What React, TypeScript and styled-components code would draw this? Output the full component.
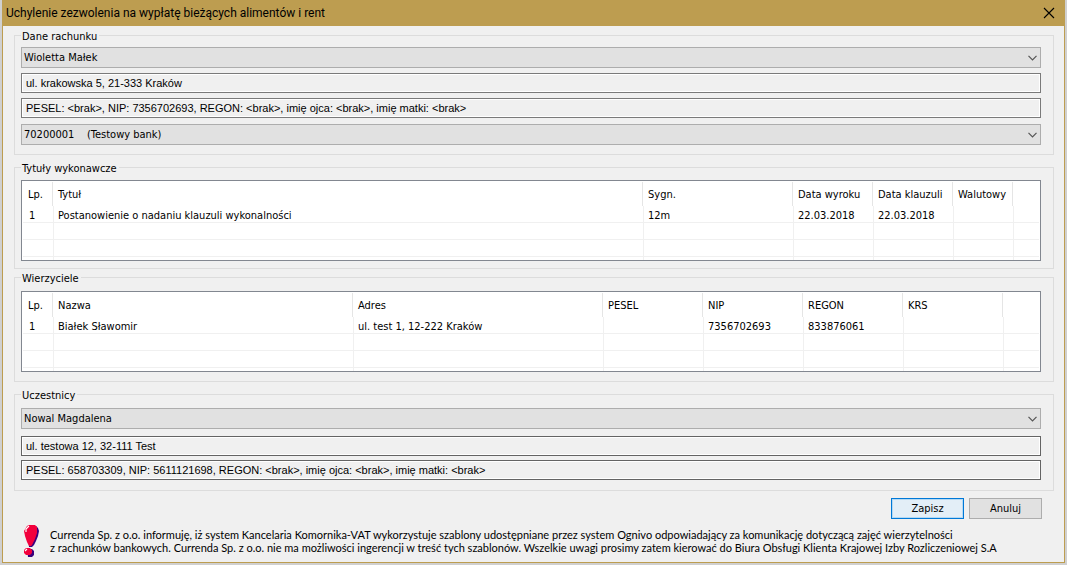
import React from 'react';
import styled, { createGlobalStyle } from 'styled-components';

const GlobalStyle = createGlobalStyle`
  *, *::before, *::after { box-sizing: border-box; }
  body {
    margin: 0;
    background: #d0d0d0;
    color: #000;
    font-family: "DejaVu Sans Condensed", "DejaVu Sans", "Liberation Sans", sans-serif;
    font-stretch: condensed;
    font-size: 11px;
    line-height: 13px;
  }
`;

const Desktop = styled.div`
  padding: 0 2px 2px;
`;

const Dialog = styled.main`
  border: 1px solid #bd9d50;
  border-top: 0;
  background: #f0f0f0;
`;

const TitleBar = styled.header`
  display: flex;
  align-items: center;
  justify-content: space-between;
  height: 26px;
  padding: 0 9px 0 3px;
  background: #bd9d50;
`;

const Title = styled.h1`
  margin: 0;
  font: 400 12px/16px Roboto, "Noto Sans", sans-serif;
`;

const CloseButton = styled.button`
  display: flex;
  padding: 0;
  border: 0;
  background: none;
`;

const Form = styled.form`
  padding: 3px 10px 5px 11px;
`;

const Group = styled.fieldset<{ $top: number; $bottom: number; $after: number }>`
  min-width: 0;
  margin: 0 0 ${(p) => p.$after}px;
  padding: ${(p) => p.$top}px 12px ${(p) => p.$bottom}px 6px;
  border: 1px solid #dcdcdc;
`;

const Legend = styled.legend`
  padding: 0 2px 0 1px;
  height: 13px;
  line-height: 15px;
`;

const Stack = styled.div`
  display: flex;
  flex-direction: column;
`;

const SelectBox = styled.div<{ $before?: number }>`
  position: relative;
  margin-top: ${(p) => p.$before ?? 0}px;
`;

const Select = styled.select`
  appearance: none;
  display: block;
  width: 100%;
  height: 21px;
  padding: 0 20px 0 2px;
  border: 1px solid #adadad;
  border-radius: 0;
  background: #e1e1e1;
  color: #000;
  font: inherit;
`;

const Chevron = styled.svg`
  position: absolute;
  top: 8px;
  right: 4px;
  pointer-events: none;
`;

const Field = styled.input<{ $before: number; $dark?: boolean }>`
  display: block;
  width: 100%;
  height: 20px;
  margin-top: ${(p) => p.$before}px;
  padding: 0 4px;
  border: 1px solid ${(p) => (p.$dark ? '#646464' : '#7a7a7a')};
  border-radius: 0;
  background: #f0f0f0;
  box-shadow: inset 0 0 0 1px #fff;
  color: #000;
  font: inherit;
  font-family: "Liberation Sans", sans-serif;
`;

const ListView = styled.div`
  height: 81px;
  padding: 1px;
  border: 1px solid #828790;
  background: #fff;
  overflow: hidden;
`;

const Table = styled.table`
  width: 100%;
  table-layout: fixed;
  border-collapse: separate;
  border-spacing: 0;
`;

const HeadCell = styled.th`
  height: 24px;
  padding: 0 0 0 4px;
  background: linear-gradient(#e5e5e5, #e5e5e5) right 1px top / 1px 100% no-repeat;
  font-weight: 400;
  text-align: left;
  white-space: nowrap;

  &:first-child { padding-left: 5px; }
  &:last-child { background: none; }
`;

const Cell = styled.td`
  height: 17px;
  padding: 2px 0 0 4px;
  border-right: 1px solid #f0f0f0;
  border-bottom: 1px solid #f0f0f0;
  white-space: nowrap;

  &:first-child { padding-left: 6px; }
  &:last-child { border-right: 0; }
`;

const Actions = styled.div`
  display: flex;
  justify-content: flex-end;
  gap: 5px;
  padding: 0 12px 0 0;
`;

const Button = styled.button<{ $primary?: boolean }>`
  width: 73px;
  height: 21px;
  padding: 0;
  border: 1px solid ${(p) => (p.$primary ? '#0078d7' : '#adadad')};
  background: ${(p) => (p.$primary ? '#e3eef7' : '#e1e1e1')};
  box-shadow: ${(p) => (p.$primary ? 'inset 0 0 0 1px #b5d9f3' : 'none')};
  color: #000;
  font: inherit;
`;

const Notice = styled.div`
  display: flex;
  align-items: flex-start;
  gap: 10px;
  padding: 5px 0 0 9px;
`;

const NoticeText = styled.p`
  margin: 4px 0 1px;
  font-family: Lato, sans-serif;
  white-space: nowrap;
`;

type Column = { label: string; width?: number };

function DropDown({ label, value, before }: { label: string; value: string; before?: number }) {
  return (
    <SelectBox $before={before}>
      <Select aria-label={label} defaultValue={value}>
        <option value={value}>{value}</option>
      </Select>
      <Chevron width="9" height="6" viewBox="0 0 9 6" fill="none" stroke="#555" strokeWidth="1.2" aria-hidden="true">
        <path d="M0.5 0.8 4.5 4.8 8.5 0.8" />
      </Chevron>
    </SelectBox>
  );
}

function DataList({ label, columns, rows }: { label: string; columns: Column[]; rows: string[][] }) {
  return (
    <ListView>
      <Table aria-label={label}>
        <colgroup>
          {columns.map((c, i) => (
            <col key={i} width={c.width} />
          ))}
        </colgroup>
        <thead>
          <tr>
            {columns.map((c, i) => (
              <HeadCell key={i}>{c.label}</HeadCell>
            ))}
          </tr>
        </thead>
        <tbody>
          {[...rows, [], [], []].map((row, r) => (
            <tr key={r}>
              {columns.map((_, i) => (
                <Cell key={i}>{row[i]}</Cell>
              ))}
            </tr>
          ))}
        </tbody>
      </Table>
    </ListView>
  );
}

const titleColumns: Column[] = [
  { label: 'Lp.', width: 31 },
  { label: 'Tytuł' },
  { label: 'Sygn.', width: 150 },
  { label: 'Data wyroku', width: 80 },
  { label: 'Data klauzuli', width: 80 },
  { label: 'Walutowy', width: 60 },
  { label: '', width: 25 },
];

const creditorColumns: Column[] = [
  { label: 'Lp.', width: 31 },
  { label: 'Nazwa' },
  { label: 'Adres', width: 250 },
  { label: 'PESEL', width: 100 },
  { label: 'NIP', width: 100 },
  { label: 'REGON', width: 100 },
  { label: 'KRS', width: 100 },
  { label: '', width: 35 },
];

export default function App() {
  return (
    <Desktop>
      <GlobalStyle />
      <Dialog>
        <TitleBar>
          <Title>Uchylenie zezwolenia na wypłatę bieżących alimentów i rent</Title>
          <CloseButton type="button" aria-label="Zamknij">
            <svg width="12" height="12" viewBox="0 0 12 12" fill="none" stroke="#000" strokeWidth="1.1">
              <path d="M1 1 11 11M11 1 1 11" />
            </svg>
          </CloseButton>
        </TitleBar>
        <Form onSubmit={(e) => e.preventDefault()}>
          <Group $top={5} $bottom={9} $after={6}>
            <Legend>Dane rachunku</Legend>
            <Stack>
              <DropDown label="Właściciel rachunku" value="Wioletta Małek" />
              <Field $before={5} readOnly aria-label="Adres" defaultValue="ul. krakowska 5, 21-333 Kraków" />
              <Field
                $before={5}
                readOnly
                aria-label="Identyfikatory"
                defaultValue="PESEL: <brak>, NIP: 7356702693, REGON: <brak>, imię ojca: <brak>, imię matki: <brak>"
              />
              <DropDown before={6} label="Bank" value={'70200001\u00a0\u00a0\u00a0\u00a0(Testowy bank)'} />
            </Stack>
          </Group>

          <Group $top={6} $bottom={7} $after={2}>
            <Legend>Tytuły wykonawcze</Legend>
            <DataList
              label="Tytuły wykonawcze"
              columns={titleColumns}
              rows={[['1', 'Postanowienie o nadaniu klauzuli wykonalności', '12m', '22.03.2018', '22.03.2018']]}
            />
          </Group>

          <Group $top={7} $bottom={9} $after={6}>
            <Legend>Wierzyciele</Legend>
            <DataList
              label="Wierzyciele"
              columns={creditorColumns}
              rows={[['1', 'Białek Sławomir', 'ul. test 1, 12-222 Kraków', '', '7356702693', '833876061']]}
            />
          </Group>

          <Group $top={7} $bottom={10} $after={7}>
            <Legend>Uczestnicy</Legend>
            <Stack>
              <DropDown label="Uczestnik" value="Nowal Magdalena" />
              <Field $before={7} $dark readOnly aria-label="Adres uczestnika" defaultValue="ul. testowa 12, 32-111 Test" />
              <Field
                $before={4}
                $dark
                readOnly
                aria-label="Identyfikatory uczestnika"
                defaultValue="PESEL: 658703309, NIP: 5611121698, REGON: <brak>, imię ojca: <brak>, imię matki: <brak>"
              />
            </Stack>
          </Group>

          <Actions>
            <Button type="submit" $primary>Zapisz</Button>
            <Button type="button">Anuluj</Button>
          </Actions>

          <Notice>
            <svg width="17" height="33" viewBox="0 0 17 33" aria-hidden="true">
              <path d="M5 2h8l2 2 1 3-1 5-2 5-2 4-2 2H6Z" fill="#3a007c" />
              <path d="M4 25h5l2 2v4l-2 2H5Z" fill="#3a007c" />
              <path d="M4 2 6 1h6l2 2v6l-2 6-3 6-1 1H6L4 18 2 12 1 7Z" fill="#f2003c" />
              <path d="M3 24h4l2 2v3l-2 2H3l-2-2v-3Z" fill="#f2003c" />
              <path d="M3 8V5l3-3M2 27l2-2" stroke="#fff" strokeWidth="1.2" fill="none" />
            </svg>
            <NoticeText>
              Currenda Sp. z o.o. informuję, iż system Kancelaria Komornika-VAT wykorzystuje szablony udostępniane przez system Ognivo odpowiadający za komunikację dotyczącą zajęć wierzytelności
              <br />
              z rachunków bankowych. Currenda Sp. z o.o. nie ma możliwości ingerencji w treść tych szablonów. Wszelkie uwagi prosimy zatem kierować do Biura Obsługi Klienta Krajowej Izby Rozliczeniowej S.A
            </NoticeText>
          </Notice>
        </Form>
      </Dialog>
    </Desktop>
  );
}
